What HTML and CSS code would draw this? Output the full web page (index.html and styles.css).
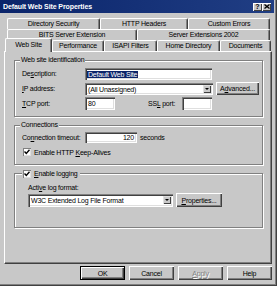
FILE: index.html
```html
<!DOCTYPE html>
<html lang="en">
<head>
    <meta charset="UTF-8">
    <title>Default Web Site Properties</title>
    <link rel="stylesheet" href="styles.css">
</head>
<body>
    <div class="window">
        <div class="titlebar">
            <span class="title">Default Web Site Properties</span>
            <div class="caption-buttons">
                <span class="cap-btn">?</span>
                <span class="cap-btn">
                    <svg width="6" height="5" viewBox="0 0 6 5"><path d="M0.5 0.5 L5.5 4.5 M5.5 0.5 L0.5 4.5" stroke="#000" stroke-width="1.3" fill="none"/></svg>
                </span>
            </div>
        </div>

        <div class="tabs">
            <div class="tab-row row1">
                <div class="tab">Directory Security</div>
                <div class="tab">HTTP Headers</div>
                <div class="tab">Custom Errors</div>
            </div>
            <div class="tab-row row2">
                <div class="tab">BITS Server Extension</div>
                <div class="tab">Server Extensions 2002</div>
            </div>
            <div class="tab-row row3">
                <div class="tab active">Web Site</div>
                <div class="tab">Performance</div>
                <div class="tab">ISAPI Filters</div>
                <div class="tab">Home Directory</div>
                <div class="tab">Documents</div>
            </div>
        </div>

        <div class="panel">
            <fieldset class="group group-id">
                <legend>Web site identification</legend>
                <div class="rows">
                    <div class="row">
                        <span class="label">De<u>s</u>cription:</span>
                        <div class="textbox desc"><span class="selected">Default Web Site</span></div>
                    </div>
                    <div class="row">
                        <span class="label"><u>I</u>P address:</span>
                        <div class="textbox combo ip">
                            <span>(All Unassigned)</span>
                            <span class="arrow"></span>
                        </div>
                        <span class="btn advanced">A<u>d</u>vanced...</span>
                    </div>
                    <div class="row">
                        <span class="label"><u>T</u>CP port:</span>
                        <div class="textbox port">80</div>
                        <span class="label ssl">SS<u>L</u> port:</span>
                        <div class="textbox port"></div>
                    </div>
                </div>
            </fieldset>

            <fieldset class="group group-conn">
                <legend>Connections</legend>
                <div class="rows">
                    <div class="row">
                        <span class="label">Co<u>n</u>nection timeout:</span>
                        <div class="textbox timeout">120</div>
                        <span class="unit">seconds</span>
                    </div>
                    <div class="row check-row">
                        <span class="check">
                            <svg width="6" height="6" viewBox="0 0 6 6"><path d="M0.5 2.5 L2.3 4.5 L5.5 0.8" stroke="#000" stroke-width="1.4" fill="none"/></svg>
                        </span>
                        <span>Enable HTTP <u>K</u>eep-Alives</span>
                    </div>
                </div>
            </fieldset>

            <fieldset class="group group-log">
                <legend class="check-legend">
                    <span class="check">
                        <svg width="6" height="6" viewBox="0 0 6 6"><path d="M0.5 2.5 L2.3 4.5 L5.5 0.8" stroke="#000" stroke-width="1.4" fill="none"/></svg>
                    </span>
                    <span><u>E</u>nable logging</span>
                </legend>
                <div class="log-label">Acti<u>v</u>e log format:</div>
                <div class="row log-row">
                    <div class="textbox combo log-format">
                        <span>W3C Extended Log File Format</span>
                        <span class="arrow"></span>
                    </div>
                    <span class="btn properties"><u>P</u>roperties...</span>
                </div>
            </fieldset>
        </div>

        <div class="buttons">
            <span class="btn dialog default">OK</span>
            <span class="btn dialog">Cancel</span>
            <span class="btn dialog disabled"><u>A</u>pply</span>
            <span class="btn dialog">Help</span>
        </div>
    </div>
</body>
</html>
```

FILE: styles.css
```css
* {
    box-sizing: border-box;
}

body {
    margin: 0;
    font-family: "Liberation Sans", Arial, sans-serif;
    font-size: 7px;
    line-height: 9px;
    letter-spacing: -0.2px;
    color: #000;
    background: #c8c8c8;
}

u {
    text-decoration-thickness: 1px;
    text-underline-offset: 1px;
}

.window {
    width: 277px;
    height: 286px;
    background: #c8c8c8;
    border-right: 1px solid #404040;
    border-bottom: 1px solid #404040;
    box-shadow: inset -1px -1px #808080;
    padding-right: 2px;
    display: flex;
    flex-direction: column;
}

/* title bar */
.titlebar {
    height: 13px;
    flex: none;
    display: flex;
    align-items: center;
    justify-content: space-between;
    padding: 0 3px;
    background: linear-gradient(90deg, #0a246a, #203e84);
    color: #fff;
}

.title {
    font-weight: bold;
    letter-spacing: -0.1px;
}

.caption-buttons {
    display: flex;
}

.cap-btn {
    width: 9px;
    height: 8px;
    display: flex;
    align-items: center;
    justify-content: center;
    background: #c8c8c8;
    color: #000;
    font-size: 7px;
    font-weight: bold;
    letter-spacing: 0;
    box-shadow: inset 1px 1px #fff, inset -1px -1px #404040;
}

/* tabs */
.tabs {
    margin-top: 5px;
    padding-left: 4px;
}

.tab-row {
    display: grid;
    height: 11px;
}

.row1 {
    margin-left: 3px;
    grid-template-columns: 93px 88px 82px;
}

.row2 {
    margin-left: 3px;
    grid-template-columns: 130px 133px;
}

.row3 {
    grid-template-columns: 48px 52px 53px 63px 51px;
}

.tab {
    height: 11px;
    border-top: 1px solid #fff;
    border-left: 1px solid #fff;
    border-right: 1px solid #404040;
    box-shadow: inset -1px 0 #808080;
    border-radius: 2px 2px 0 0;
    background: #c8c8c8;
    text-align: center;
    line-height: 10px;
    white-space: nowrap;
}

.tab.active {
    position: relative;
    z-index: 1;
    height: 14px;
    margin-top: -2px;
    margin-left: 1px;
    line-height: 11px;
}

/* tab page */
.panel {
    margin-left: 4px;
    width: 268px;
    height: 213px;
    flex: none;
    border-top: 1px solid #fff;
    border-left: 1px solid #fff;
    border-right: 1px solid #404040;
    border-bottom: 1px solid #404040;
    box-shadow: inset -1px -1px #808080;
    padding: 4px 8px 0 9px;
    display: flex;
    flex-direction: column;
    gap: 4px;
}

.group {
    margin: 0;
    min-inline-size: 0;
    border: 1px solid #808080;
    box-shadow: inset 1px 1px #fff, 1px 1px #fff;
}

.group legend {
    line-height: 8px;
    padding: 0 1px;
    margin-left: -2px;
    background: #c8c8c8;
}

.group-id {
    padding: 3px 7px 6px 7px;
}

.group-conn {
    padding: 2px 7px 7px 7px;
}

.group-log {
    padding: 5px 7px 20px 13px;
}

.rows {
    display: flex;
    flex-direction: column;
    gap: 2px;
}

.group-conn .rows {
    gap: 3px;
}

.row {
    display: flex;
    align-items: center;
    height: 13px;
}

.label {
    width: 63px;
    flex: none;
    white-space: nowrap;
}

.label.ssl {
    width: 34px;
    margin-left: 33px;
}

/* sunken edit boxes */
.textbox {
    height: 12px;
    flex: none;
    background: #fff;
    padding: 2px 3px 0 3px;
    line-height: 9px;
    white-space: nowrap;
    box-shadow: inset 1px 1px #808080, inset 2px 2px #404040, inset -1px -1px #fff, inset -2px -2px #dfdfdf;
}

.desc {
    width: 127px;
    padding-left: 2px;
}

.selected {
    background: #0a246a;
    color: #fff;
    padding: 0 1px;
}

.combo {
    display: flex;
    justify-content: space-between;
    padding-right: 2px;
}

.ip {
    width: 128px;
}

.port {
    width: 30px;
    height: 13px;
}

.timeout {
    width: 52px;
    height: 11px;
    text-align: right;
    padding-top: 1px;
}

.unit {
    margin-left: 3px;
}

.arrow {
    width: 8px;
    height: 8px;
    margin-top: 0;
    position: relative;
    background: #c8c8c8;
    box-shadow: inset 1px 1px #dfdfdf, inset -1px -1px #404040;
}

.arrow::after {
    content: "";
    position: absolute;
    left: 2px;
    top: 3px;
    border-left: 2px solid transparent;
    border-right: 2px solid transparent;
    border-top: 2px solid #000;
}

/* raised buttons */
.btn {
    display: flex;
    align-items: center;
    justify-content: center;
    flex: none;
    background: #c8c8c8;
    white-space: nowrap;
    box-shadow: inset 1px 1px #fff, inset -1px -1px #404040, inset -2px -2px #808080;
}

.advanced {
    width: 43px;
    height: 13px;
    margin-left: 3px;
}

/* checkboxes */
.check {
    width: 8px;
    height: 8px;
    flex: none;
    display: flex;
    align-items: center;
    justify-content: center;
    background: #fff;
    box-shadow: inset 1px 1px #808080, inset -1px -1px #dfdfdf;
}

.check-row {
    height: 10px;
    gap: 3px;
    padding-left: 1px;
}

.check-legend {
    display: flex;
    align-items: center;
    gap: 3px;
    height: 9px;
    line-height: 9px;
}

.group-log legend.check-legend {
    margin-left: -6px;
    padding: 0 2px 0 1px;
}

.log-label {
    height: 9px;
    margin-bottom: 1px;
}

.log-row {
    height: 14px;
}

.log-format {
    width: 145px;
    height: 13px;
}

.properties {
    width: 46px;
    height: 14px;
    margin-left: 3px;
}

/* dialog buttons */
.buttons {
    display: flex;
    justify-content: flex-end;
    gap: 4px;
    margin: 2px 2px 0 0;
}

.dialog {
    width: 45px;
    height: 14px;
}

.default {
    border: 1px solid #000;
}

.disabled {
    color: #808080;
    text-shadow: 1px 1px #fff;
}
```
